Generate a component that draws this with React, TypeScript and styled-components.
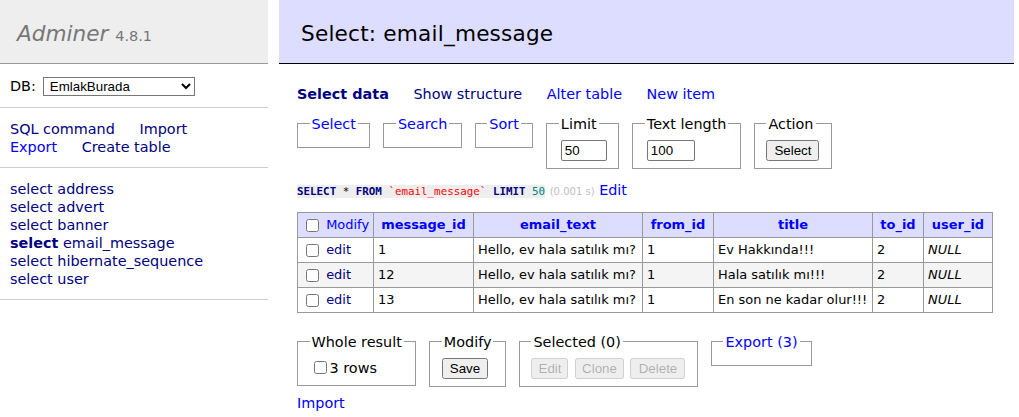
import React from "react";
import styled, { createGlobalStyle } from "styled-components";

const Global = createGlobalStyle`
  html, body { margin: 0; padding: 0; background: #fff; overflow: hidden; }
  body { font: 14.4px/1.25 "DejaVu Sans", Verdana, sans-serif; color: #000; }
  a { color: blue; text-decoration: none; }
`;

const Page = styled.div`
  display: flex;
  align-items: flex-start;
  width: 1019px;
`;

const Menu = styled.div`
  width: 268px;
  flex: none;
`;

const Logo = styled.h1`
  margin: 0;
  height: 27px;
  padding: 20px 0 16px 17px;
  background: #eee;
  border-bottom: 1px solid #999;
  font-size: 21.6px;
  line-height: 27px;
  font-weight: normal;
  color: #777;
  white-space: nowrap;
`;

const LogoName = styled.span`
  font-style: italic;
`;

const Version = styled.span`
  font-size: 67%;
  color: #777;
`;

const MenuBlock = styled.div`
  padding: 12px 14px 11px 10px;
  border-bottom: 1px solid #ccc;
`;

const DbRow = styled.div`
  display: flex;
  align-items: center;
  gap: 7px;
  height: 20px;
`;

const DbSelect = styled.select`
  width: 152px;
  height: 19px;
  font: 13.333px "Liberation Sans", Arial, sans-serif;
  border: 1px solid #767676;
  border-radius: 0;
  padding: 0 0 0 2px;
  background: #fff;
  color: #000;
`;

const LinkLine = styled.p`
  margin: 0;
`;

const NavLink = styled.a<{ $visited?: boolean; $active?: boolean }>`
  color: ${(p) => (p.$visited ? "navy" : "blue")};
  font-weight: ${(p) => (p.$active ? "bold" : "normal")};
  margin-right: 20px;
  white-space: nowrap;
`;

const TableList = styled.ul`
  margin: 0;
  padding: 0;
  list-style: none;
  white-space: nowrap;
`;

const TableItem = styled.li`
  margin: 0;
`;

const Visited = styled.a<{ $active?: boolean }>`
  color: navy;
  font-weight: ${(p) => (p.$active ? "bold" : "normal")};
`;

const Content = styled.div`
  margin-left: 11px;
  width: 717px;
  padding-left: 18px;
  flex: none;
`;

const Title = styled.h2`
  margin: 0 0 21px -18px;
  height: 27px;
  padding: 20px 0 16px 22px;
  background: #ddf;
  border-bottom: 1px solid #000;
  font-size: 21.6px;
  line-height: 27px;
  letter-spacing: 0.2px;
  font-weight: normal;
  color: #000;
`;

const Links = styled.p`
  margin: 0;
  white-space: nowrap;
`;

const FieldRow = styled.div<{ $top: number }>`
  display: flex;
  align-items: flex-start;
  gap: 13px;
  margin-top: ${(p) => p.$top}px;
`;

const Box = styled.fieldset`
  margin: 0;
  padding: 7.2px 11.5px;
  border: 1px solid #999;
  min-width: 0;
`;

const Legend = styled.legend`
  padding: 0 2px;
  line-height: 18px;
`;

const TextInput = styled.input<{ $w: number }>`
  width: ${(p) => p.$w}px;
  height: 21px;
  box-sizing: border-box;
  margin: 0 0 0 2px;
  padding: 1px 3px;
  border: 1px solid #767676;
  border-radius: 2px;
  font: 13.333px "Liberation Sans", Arial, sans-serif;
  color: #000;
  display: block;
`;

const Button = styled.button<{ $w?: number }>`
  font: 13.333px "Liberation Sans", Arial, sans-serif;
  margin: 0;
  padding: 1px 0;
  width: ${(p) => (p.$w ? `${p.$w}px` : "auto")};
  padding-inline: ${(p) => (p.$w ? "0" : "6px")};
`;

const SqlLine = styled.p`
  margin: 12.5px 0 0;
  white-space: nowrap;
`;

const Code = styled.code`
  background: #eee;
  font: 10.85px/1.25 "DejaVu Sans Mono", monospace;
`;

const Kw = styled.span`
  color: navy;
  font-weight: bold;
`;

const Bac = styled.span`
  color: red;
`;

const Num = styled.span`
  color: #007f7f;
`;

const Time = styled.span`
  color: silver;
  font-size: 10px;
`;

const Grid = styled.table`
  border-collapse: collapse;
  table-layout: fixed;
  width: 695px;
  margin: 12.4px 0 0 0;
  font-size: 12.96px;
  line-height: 16px;
`;

const HeadCell = styled.th<{ $left?: boolean }>`
  background: #ddf;
  border: 1px solid #999;
  padding: 0 4px;
  height: 24px;
  text-align: ${(p) => (p.$left ? "left" : "center")};
  font-weight: ${(p) => (p.$left ? "normal" : "bold")};
  white-space: nowrap;
  overflow: hidden;
`;

const Row = styled.tr<{ $odd?: boolean }>`
  background: ${(p) => (p.$odd ? "#f4f4f4" : "#fff")};
`;

const Cell = styled.td`
  border: 1px solid #999;
  padding: 0 4px;
  height: 24px;
  white-space: nowrap;
  overflow: hidden;
`;

const Check = styled.input`
  vertical-align: middle;
  margin: 0 3px 0 4px;
  width: 13px;
  height: 13px;
`;

const Footer = styled.div`
  margin-top: 20px;
  padding-bottom: 7.2px;
`;

const ButtonRow = styled.div`
  display: flex;
  gap: 6.5px;
`;

const RowsLabel = styled.label`
  display: flex;
  align-items: center;
  height: 20px;
`;

const ImportLine = styled.p`
  margin: 0;
`;

const tables = ["address", "advert", "banner", "email_message", "hibernate_sequence", "user"];

const rows = [
  { id: "1", text: "Hello, ev hala satılık mı?", from: "1", title: "Ev Hakkında!!!", to: "2" },
  { id: "12", text: "Hello, ev hala satılık mı?", from: "1", title: "Hala satılık mı!!!", to: "2" },
  { id: "13", text: "Hello, ev hala satılık mı?", from: "1", title: "En son ne kadar olur!!!", to: "2" },
];

const cols = [76, 100, 169, 71, 159, 51, 69];
const heads = ["message_id", "email_text", "from_id", "title", "to_id", "user_id"];

export default function App() {
  return (
    <>
      <Global />
      <Page>
        <Menu>
          <Logo>
            <LogoName>Adminer</LogoName> <Version>4.8.1</Version>
          </Logo>
          <MenuBlock>
            <DbRow>
              <span>DB:</span>
              <DbSelect defaultValue="EmlakBurada">
                <option>EmlakBurada</option>
              </DbSelect>
            </DbRow>
          </MenuBlock>
          <MenuBlock>
            <LinkLine>
              <NavLink $visited href="#">SQL command</NavLink> <NavLink $visited href="#">Import</NavLink>
            </LinkLine>
            <LinkLine>
              <NavLink href="#">Export</NavLink> <NavLink $visited href="#">Create table</NavLink>
            </LinkLine>
          </MenuBlock>
          <MenuBlock>
            <TableList>
              {tables.map((t) => (
                <TableItem key={t}>
                  <Visited href="#" $active={t === "email_message"}>select</Visited>{" "}
                  <Visited href="#">{t}</Visited>
                </TableItem>
              ))}
            </TableList>
          </MenuBlock>
        </Menu>
        <Content>
          <Title>Select: email_message</Title>
          <Links>
            <NavLink $visited $active href="#">Select data</NavLink>{" "}
            <NavLink $visited href="#">Show structure</NavLink>{" "}
            <NavLink href="#">Alter table</NavLink>{" "}
            <NavLink href="#">New item</NavLink>
          </Links>
          <FieldRow $top={11.5}>
            <Box><Legend><a href="#">Select</a></Legend></Box>
            <Box><Legend><a href="#">Search</a></Legend></Box>
            <Box><Legend><a href="#">Sort</a></Legend></Box>
            <Box>
              <Legend>Limit</Legend>
              <TextInput $w={46} type="text" defaultValue="50" />
            </Box>
            <Box>
              <Legend>Text length</Legend>
              <TextInput $w={48} type="text" defaultValue="100" />
            </Box>
            <Box>
              <Legend>Action</Legend>
              <Button type="button">Select</Button>
            </Box>
          </FieldRow>
          <SqlLine>
            <Code>
              <Kw>SELECT</Kw> * <Kw>FROM</Kw> <Bac>`email_message`</Bac> <Kw>LIMIT</Kw> <Num>50</Num>
            </Code>{" "}
            <Time>(0.001 s)</Time> <a href="#">Edit</a>
          </SqlLine>
          <Grid>
            <colgroup>
              {cols.map((w, i) => (
                <col key={i} style={{ width: w }} />
              ))}
            </colgroup>
            <thead>
              <tr>
                <HeadCell $left>
                  <Check type="checkbox" /> <a href="#">Modify</a>
                </HeadCell>
                {heads.map((h) => (
                  <HeadCell key={h}>
                    <a href="#">{h}</a>
                  </HeadCell>
                ))}
              </tr>
            </thead>
            <tbody>
              {rows.map((r, i) => (
                <Row key={r.id} $odd={i % 2 === 1}>
                  <Cell>
                    <Check type="checkbox" /> <Visited href="#">edit</Visited>
                  </Cell>
                  <Cell>{r.id}</Cell>
                  <Cell>{r.text}</Cell>
                  <Cell>{r.from}</Cell>
                  <Cell>{r.title}</Cell>
                  <Cell>{r.to}</Cell>
                  <Cell><i>NULL</i></Cell>
                </Row>
              ))}
            </tbody>
          </Grid>
          <Footer>
            <FieldRow $top={0}>
              <Box>
                <Legend>Whole result</Legend>
                <RowsLabel>
                  <Check type="checkbox" />3 rows
                </RowsLabel>
              </Box>
              <Box>
                <Legend>Modify</Legend>
                <Button type="button">Save</Button>
              </Box>
              <Box>
                <Legend>Selected (0)</Legend>
                <ButtonRow>
                  <Button type="button" disabled $w={37}>Edit</Button>
                  <Button type="button" disabled $w={49}>Clone</Button>
                  <Button type="button" disabled $w={55}>Delete</Button>
                </ButtonRow>
              </Box>
              <Box>
                <Legend><a href="#">Export (3)</a></Legend>
              </Box>
            </FieldRow>
          </Footer>
          <ImportLine>
            <a href="#">Import</a>
          </ImportLine>
        </Content>
      </Page>
    </>
  );
}
